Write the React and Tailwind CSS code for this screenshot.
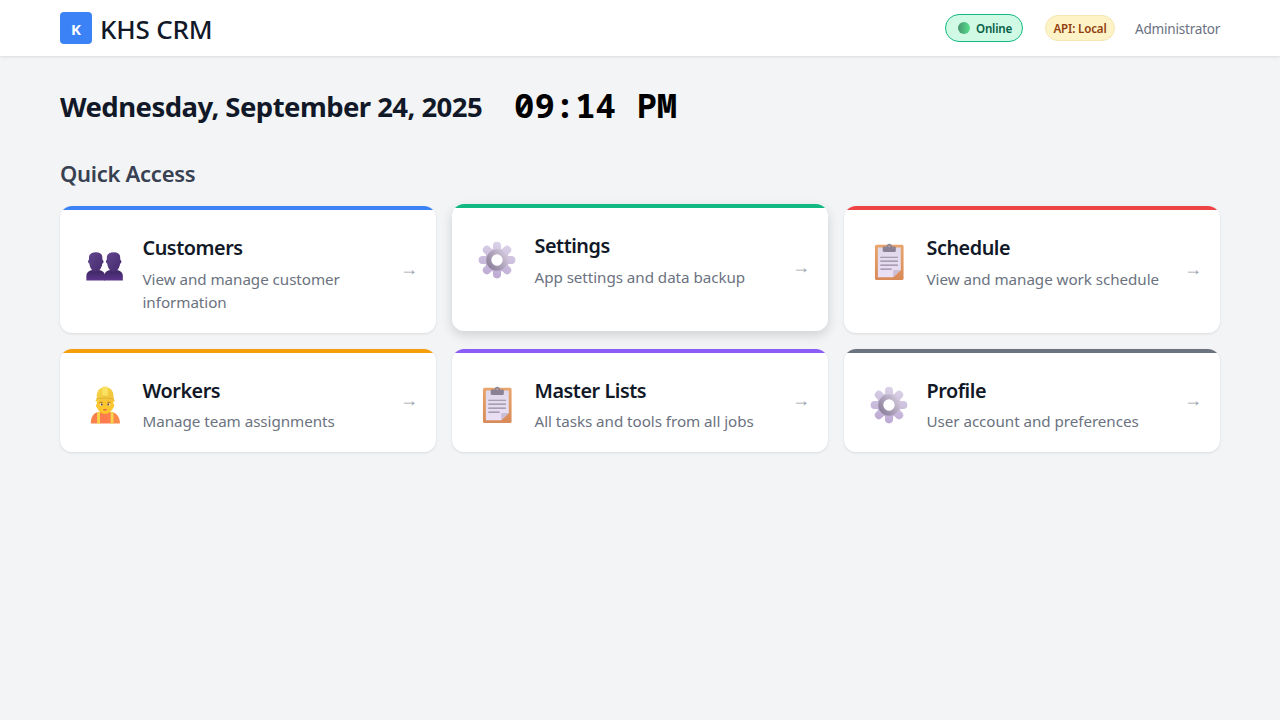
import React from "react";

function PeopleIcon() {
  return (
    <svg viewBox="0 0 32 32" className="size-[42px]">
      <defs>
        <linearGradient id="head" x1="0" y1="0" x2="1" y2="1">
          <stop offset="0" stopColor="#63478f" />
          <stop offset="1" stopColor="#462a6d" />
        </linearGradient>
        <linearGradient id="body" x1="0" y1="0" x2="0" y2="1">
          <stop offset="0" stopColor="#3c2660" />
          <stop offset="1" stopColor="#5c358c" />
        </linearGradient>
      </defs>
      {[1.8, 15.4].map((x) => (
        <g key={x} transform={`translate(${x} 0)`}>
          <path d="M0 30v-3.200C0 24 2 22.400 5 22.100h4.200c3 .3 5 1.900 5 4.700V30z" fill="url(#body)" />
          <path d="M2 12.500C2 10 4 8.500 7.200 8.500s5 1.500 5 4v1.700c1 0 1.300 2.800-.1 3-.3 3.600-2.600 6.300-4.900 6.300s-4.600-2.700-4.900-6.300c-1.400-.2-1.100-3-.3-3z" fill="url(#head)" />
        </g>
      ))}
    </svg>
  );
}

function GearIcon() {
  return (
    <svg viewBox="0 0 32 32" className="size-[42px]">
      <defs>
        <linearGradient id="teeth" gradientUnits="userSpaceOnUse" x1="19" y1="2" x2="12" y2="30">
          <stop offset="0" stopColor="#dbd4e8" />
          <stop offset="1" stopColor="#bca8d3" />
        </linearGradient>
        <linearGradient id="hub" x1="1" y1=".1" x2="0" y2=".9">
          <stop offset="0" stopColor="#cec5d8" />
          <stop offset="1" stopColor="#8d819c" />
        </linearGradient>
      </defs>
      <g fill="url(#teeth)">
        <circle cx="16" cy="16" r="9.200" />
        <path d="M16 5.100v21.800M5.100 16h21.800M8.300 8.300l15.400 15.400M8.300 23.700L23.700 8.300" stroke="url(#teeth)" strokeWidth="6.200" strokeLinecap="round" />
      </g>
      <circle cx="16" cy="16" r="6.200" fill="none" stroke="url(#hub)" strokeWidth="4" />
      <circle cx="16" cy="16" r="4.300" fill="#fff" />
    </svg>
  );
}

function ClipboardIcon() {
  return (
    <svg viewBox="0 0 32 32" className="size-[42px]">
      <defs>
        <linearGradient id="board" x1="0" y1="0" x2="0" y2="1">
          <stop offset="0" stopColor="#e9a56b" />
          <stop offset="1" stopColor="#d88a58" />
        </linearGradient>
        <linearGradient id="sheet" x1="0" y1="0" x2="0" y2="1">
          <stop offset="0" stopColor="#dfd8ea" />
          <stop offset="1" stopColor="#ebe0f5" />
        </linearGradient>
      </defs>
      <rect x="5.300" y="2.900" width="21.800" height="26.800" rx="1.200" fill="url(#board)" />
      <path d="M7.500 5h17.500v17l-5.800 5.700H7.500z" fill="url(#sheet)" />
      <path d="M25 22h-5.200c-.4 0-.6.2-.6.600v5.100z" fill="#cabdd6" />
      <path d="M11.200 5.200c0-.7.4-1.100 1-1.100h1.900C14.300 2.900 15.200 2.100 16.200 2.100s1.900.8 2.100 2h1.900c.6 0 1 .4 1 1.100v2.200c0 .6-.3.9-.9.900h-8.200c-.6 0-.9-.3-.9-.9z" fill="#8b8194" />
      <circle cx="16.200" cy="4" r=".7" fill="#c3a79a" />
      <path d="M9.700 12.400h12.800M9.700 15.400h12.800M9.700 18.400h12.800M9.700 21.400h8" stroke="#948a9f" strokeWidth=".9" strokeLinecap="round" />
    </svg>
  );
}

function WorkerIcon() {
  return (
    <svg viewBox="0 0 32 32" className="size-[42px]">
      <defs>
        <linearGradient id="hat" x1="0" y1="0" x2="1" y2="1">
          <stop offset="0" stopColor="#f6d84c" />
          <stop offset="1" stopColor="#f0bf37" />
        </linearGradient>
        <linearGradient id="vest" x1="0" y1="0" x2="1" y2="0">
          <stop offset="0" stopColor="#f5824b" />
          <stop offset=".5" stopColor="#ff7a4e" />
          <stop offset="1" stopColor="#f98d4b" />
        </linearGradient>
      </defs>
      <path d="M5.200 30c0-4.500 1.800-8.100 5.600-8.700h10.400c3.800.6 6.200 4.200 6.200 8.700z" fill="url(#vest)" />
      <path d="M12.300 20h7.400v1.800q-3.700 2.600-7.400 0z" fill="#f2ab2c" />
      <path d="M10 21.600l2.200-.4V30H10zM20.300 21.200l2.200.4V30h-2.200z" fill="#f7d34c" />
      <path d="M9.800 12h12.600v3c.8.200.8 2.800-.2 3-.8 2.600-3.200 4.400-6.100 4.400S10.700 20.600 10 18c-1-.2-1-2.800-.2-3z" fill="#fbc62e" />
      <path d="M11.800 14.300q1-.9 2.400 0M17.800 14.300q1.400-.9 2.400 0" stroke="#a56829" strokeWidth=".7" fill="none" />
      <ellipse cx="13.200" cy="15.700" rx="1.200" ry=".8" fill="#fff" />
      <ellipse cx="18.800" cy="15.700" rx="1.200" ry=".8" fill="#fff" />
      <circle cx="13.500" cy="15.600" r=".75" fill="#5d3b2e" />
      <circle cx="18.500" cy="15.600" r=".75" fill="#5d3b2e" />
      <path d="M14.300 19.500q1.700-.7 3.400 0-1.700 1.400-3.400 0z" fill="#d6453e" />
      <path d="M9.700 11V9c0-4 2.600-6.800 6.400-6.800S22.500 5 22.500 9v2l.8 1.300c.3.700 0 1-.8.900-5-.8-7.800-.8-12.800 0-.8.100-1.100-.2-.8-.9z" fill="url(#hat)" />
      <path d="M14 2.700c0-.6.700-.8 2.100-.8s2.100.2 2.100.8v6H14z" fill="#f9e263" />
      <path d="M9.500 11.300q6.600-1.400 13.200 0" stroke="#dba72f" strokeWidth=".5" fill="none" />
    </svg>
  );
}

const cards = [
  { title: "Customers", text: "View and manage customer information", Icon: PeopleIcon, bar: "bg-[#3b82f6]" },
  { title: "Settings", text: "App settings and data backup", Icon: GearIcon, bar: "bg-[#10b981]", raised: true },
  { title: "Schedule", text: "View and manage work schedule", Icon: ClipboardIcon, bar: "bg-[#ef4444]" },
  { title: "Workers", text: "Manage team assignments", Icon: WorkerIcon, bar: "bg-[#f59e0b]" },
  { title: "Master Lists", text: "All tasks and tools from all jobs", Icon: ClipboardIcon, bar: "bg-[#8b5cf6]" },
  { title: "Profile", text: "User account and preferences", Icon: GearIcon, bar: "bg-[#6b7280]" },
];

export default function App() {
  return (
    <div className="min-h-screen bg-[#f3f4f6] font-['Noto_Sans','Open_Sans',sans-serif]">
      <header className="h-14 bg-white shadow-[0_1px_3px_rgba(0,0,0,0.1)]">
        <div className="mx-auto flex h-full max-w-[1160px] items-center justify-between">
          <div className="flex items-center gap-2">
            <div className="flex size-8 items-center justify-center rounded bg-[#3b82f6] pt-[2px] text-[15px] font-bold text-white">K</div>
            <h1 className="pt-px text-[26px] font-medium leading-9 tracking-[-0.2px] text-[#111827]">KHS CRM</h1>
          </div>
          <div className="flex items-center">
            <div className="flex h-7 w-[78px] items-center gap-[6px] rounded-full border border-[#10b981] bg-[#d1fae5] pl-3 text-[11.6px] font-semibold tracking-[-0.2px] text-[#065f46]">
              <span className="size-3 rounded-full bg-linear-to-r from-[#48946e] to-[#55e38c]" />
              <span className="pt-0.5">Online</span>
            </div>
            <div className="ml-[22px] flex h-[26px] w-[70px] items-center justify-center rounded-full border border-[#f5e6b5] bg-[#fef3c7] pt-0.5 text-[11.6px] font-semibold tracking-[-0.18px] text-[#92400e]">API: Local</div>
            <span className="ml-5 w-[85px] pt-0.5 text-[13.6px] tracking-[-0.24px] text-[#6b7280]">Administrator</span>
          </div>
        </div>
      </header>
      <main className="mx-auto max-w-[1160px] pt-[29px]">
        <div className="flex h-11 items-center gap-8">
          <h2 className="w-[422px] whitespace-nowrap text-[27.500px] font-bold tracking-[-0.55px] text-[#111827]">Wednesday, September 24, 2025</h2>
          <span className="pb-[5px] font-['Noto_Sans_Mono',monospace] text-[34px] font-bold leading-10 text-black">09:14 PM</span>
        </div>
        <h3 className="mt-7 h-[49px] text-[22px] font-semibold tracking-[-0.28px] text-[#374151]">Quick Access</h3>
        <div className="grid grid-cols-3 gap-4">
          {cards.map(({ title, text, Icon, bar, raised }) => (
            <div key={title} className={`relative overflow-hidden rounded-xl bg-white ${raised ? "-translate-y-0.5 shadow-[0_4px_12px_rgba(0,0,0,0.15)]" : "shadow-[0_1px_3px_rgba(0,0,0,0.1)]"}`}>
              <div className={`h-1 ${bar}`} />
              <div className="flex gap-[16.500px] px-6 pb-[18.300px] pt-6">
                <div className="mt-[7px] shrink-0"><Icon /></div>
                <div>
                  <h4 className="text-[19.800px] font-semibold leading-7 tracking-[-0.45px] text-[#111827]">{title}</h4>
                  <p className="mt-[5.500px] text-[15.200px] leading-[23.500px] tracking-[-0.05px] text-[#6b7280]">{text}</p>
                </div>
              </div>
              <span className="absolute right-[18px] top-1/2 -mt-[1.500px] -translate-y-1/2 text-lg leading-7 text-[#9ca3af]">→</span>
            </div>
          ))}
        </div>
      </main>
    </div>
  );
}
